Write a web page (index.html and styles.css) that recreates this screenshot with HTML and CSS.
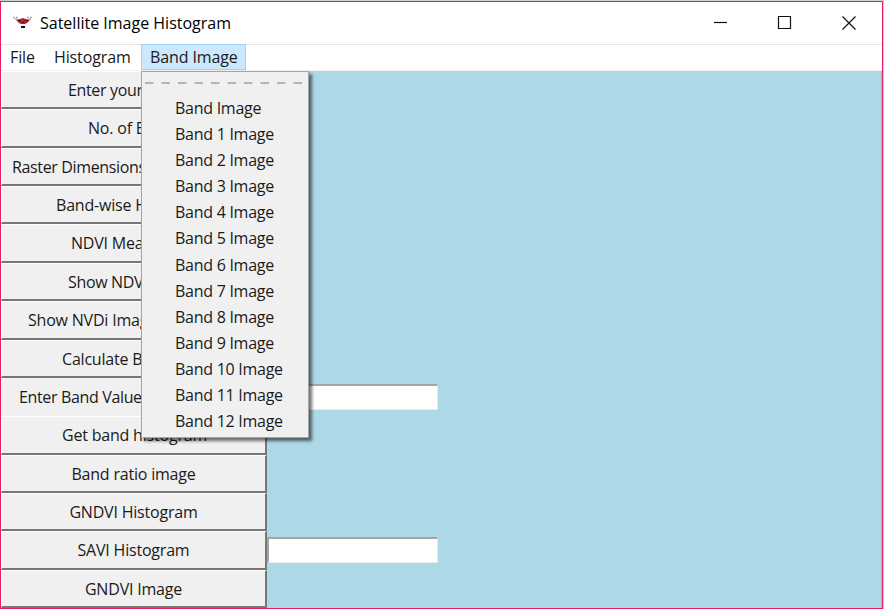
FILE: index.html
```html
<!DOCTYPE html>
<html lang="en">
<head>
<meta charset="utf-8">
<title>Satellite Image Histogram</title>
<link rel="stylesheet" href="styles.css">
</head>
<body>
<div class="window">
  <header class="titlebar">
    <svg class="logo" width="20" height="14" viewBox="0 0 20 14">
      <path d="M0 1.500h6M14 1.500h6M2 3l4 1M18 3l-4 1" stroke="#aaa" stroke-width="1.3" stroke-dasharray="2 1" fill="none"/>
      <path d="M3 4l4-1 3-1 3 1 4 1-3 3-2 1H8L6 7z" fill="#b5222e"/>
      <path d="M5 4.500h3M12 4.500h3M9 6.500h2" stroke="#5b151b"/>
      <path d="M8 11h4" stroke="#111" stroke-width="2"/>
    </svg>
    <h1 class="title">Satellite Image Histogram</h1>
    <svg class="controls" width="144" height="16" viewBox="0 0 144 16" fill="none" stroke="#111" stroke-width="1.2">
      <path d="M1 7.500h13"/>
      <path d="M65.500 1.500h12v12h-12z"/>
      <path d="M129.500 1.500l13 13M142.500 1.500l-13 13"/>
    </svg>
  </header>
  <nav class="menubar">
    <span class="tab tab-file">File</span>
    <span class="tab tab-histogram">Histogram</span>
    <span class="tab tab-band active">Band Image</span>
  </nav>
  <main class="content">
    <div class="row"><div class="button s68">Enter your file</div></div>
    <div class="row"><div class="button s88">No. of Bands</div></div>
    <div class="row"><div class="button s12">Raster Dimensions</div></div>
    <div class="row"><div class="button s56">Band-wise Hist</div></div>
    <div class="row"><div class="button s71">NDVI Measure</div></div>
    <div class="row"><div class="button s68">Show NDVI</div></div>
    <div class="row"><div class="button s28">Show NVDi Image</div></div>
    <div class="row"><div class="button s62">Calculate Band</div></div>
    <div class="row"><div class="label s19">Enter Band Values</div><input class="entry" aria-label="Band values"></div>
    <div class="row"><div class="button s62">Get band histogram</div></div>
    <div class="row"><div class="button">Band ratio image</div></div>
    <div class="row"><div class="button">GNDVI Histogram</div></div>
    <div class="row"><div class="button">SAVI Histogram</div><input class="entry" aria-label="SAVI"></div>
    <div class="row"><div class="button">GNDVI Image</div></div>
  </main>
  <div class="menu">
    <svg class="tear" width="160" height="2"><path d="M0 1h160" stroke="#b4b4b4" stroke-width="2" stroke-dasharray="8.500 8"/></svg>
    <div class="item">Band Image</div>
    <div class="item">Band 1 Image</div>
    <div class="item">Band 2 Image</div>
    <div class="item">Band 3 Image</div>
    <div class="item">Band 4 Image</div>
    <div class="item">Band 5 Image</div>
    <div class="item">Band 6 Image</div>
    <div class="item">Band 7 Image</div>
    <div class="item">Band 8 Image</div>
    <div class="item">Band 9 Image</div>
    <div class="item">Band 10 Image</div>
    <div class="item">Band 11 Image</div>
    <div class="item">Band 12 Image</div>
  </div>
</div>
</body>
</html>
```
FILE: styles.css
```css
* { box-sizing: border-box; }
body {
  margin: 0;
  padding: 1px 1px 0 0;
  width: 884px;
  height: 609px;
  overflow: hidden;
  background: #cfd0d0;
  color: #1a1a1a;
  font: 16px "Open Sans", sans-serif;
  white-space: nowrap;
}
.window {
  position: relative;
  display: flex;
  flex-direction: column;
  width: 883px;
  height: 608px;
  border: 1px solid #ea1b6b;
  background: #fff;
}
.titlebar {
  display: flex;
  flex: none;
  align-items: center;
  height: 42px;
  padding: 0 25px 0 12px;
}
.title {
  margin: 0 auto 0 7px;
  font-size: 16px;
  font-weight: 400;
  line-height: 42px;
  color: #000;
}
.menubar {
  display: flex;
  flex: none;
  height: 27px;
  border-top: 1px solid #e5e5e5;
  border-bottom: 1px solid #f0f0f0;
  letter-spacing: -.12px;
}
.tab { height: 26px; line-height: 25px; }
.tab-file { width: 44px; padding-left: 9px; }
.tab-histogram { width: 96px; padding-left: 9px; }
.tab-band { width: 105px; padding-left: 8px; }
.active { background: #cce8ff; border: 1px solid #99d1ff; line-height: 25px; margin-top: -1px; }
.content {
  flex: 1;
  min-height: 0;
  display: grid;
  grid-template-rows: repeat(14, minmax(0, 1fr));
  background: #add8e6;
  border-right: 1px solid #a4bfc9;
  letter-spacing: -.2px;
}
.row { display: flex; align-items: center; min-height: 0; }
.button, .label {
  width: 266px;
  height: 100%;
  line-height: 36.5px;
  text-align: center;
  background: #f0f0f0;
}
.label { line-height: 39px; }
.button {
  border: 1px solid #fff;
  border-right: 2px solid #777;
  border-bottom: 2px solid #777;
}
.s12, .s19, .s28, .s56, .s62, .s68, .s71, .s88 { text-align: left; }
.s12 { padding-left: 10px; }
.s19 { padding-left: 18px; }
.s28 { padding-left: 26px; }
.s56 { padding-left: 54px; }
.s62 { padding-left: 60px; }
.s68 { padding-left: 66px; }
.s71 { padding-left: 69px; }
.s88 { padding-left: 86px; }
.s12, .s19, .s68 { letter-spacing: -.35px; }
.entry {
  width: 171px;
  height: 26px;
  margin: 0;
  padding: 0;
  background: #fff;
  border: 1px solid #e3eef2;
  border-top: 2px solid #a5a5a5;
  border-left: 2px solid #a5a5a5;
}
.menu {
  position: absolute;
  left: 140px;
  top: 69px;
  width: 168px;
  height: 367px;
  padding: 10px 3px 0;
  background: #f0f0f0;
  border: 1px solid #a5a5a5;
  box-shadow: 3px 3px 3px rgba(0, 0, 0, .55);
  letter-spacing: -.27px;
}
.tear { display: block; margin-bottom: 11px; }
.item { height: 26.1px; line-height: 26px; padding-left: 30px; }
```
